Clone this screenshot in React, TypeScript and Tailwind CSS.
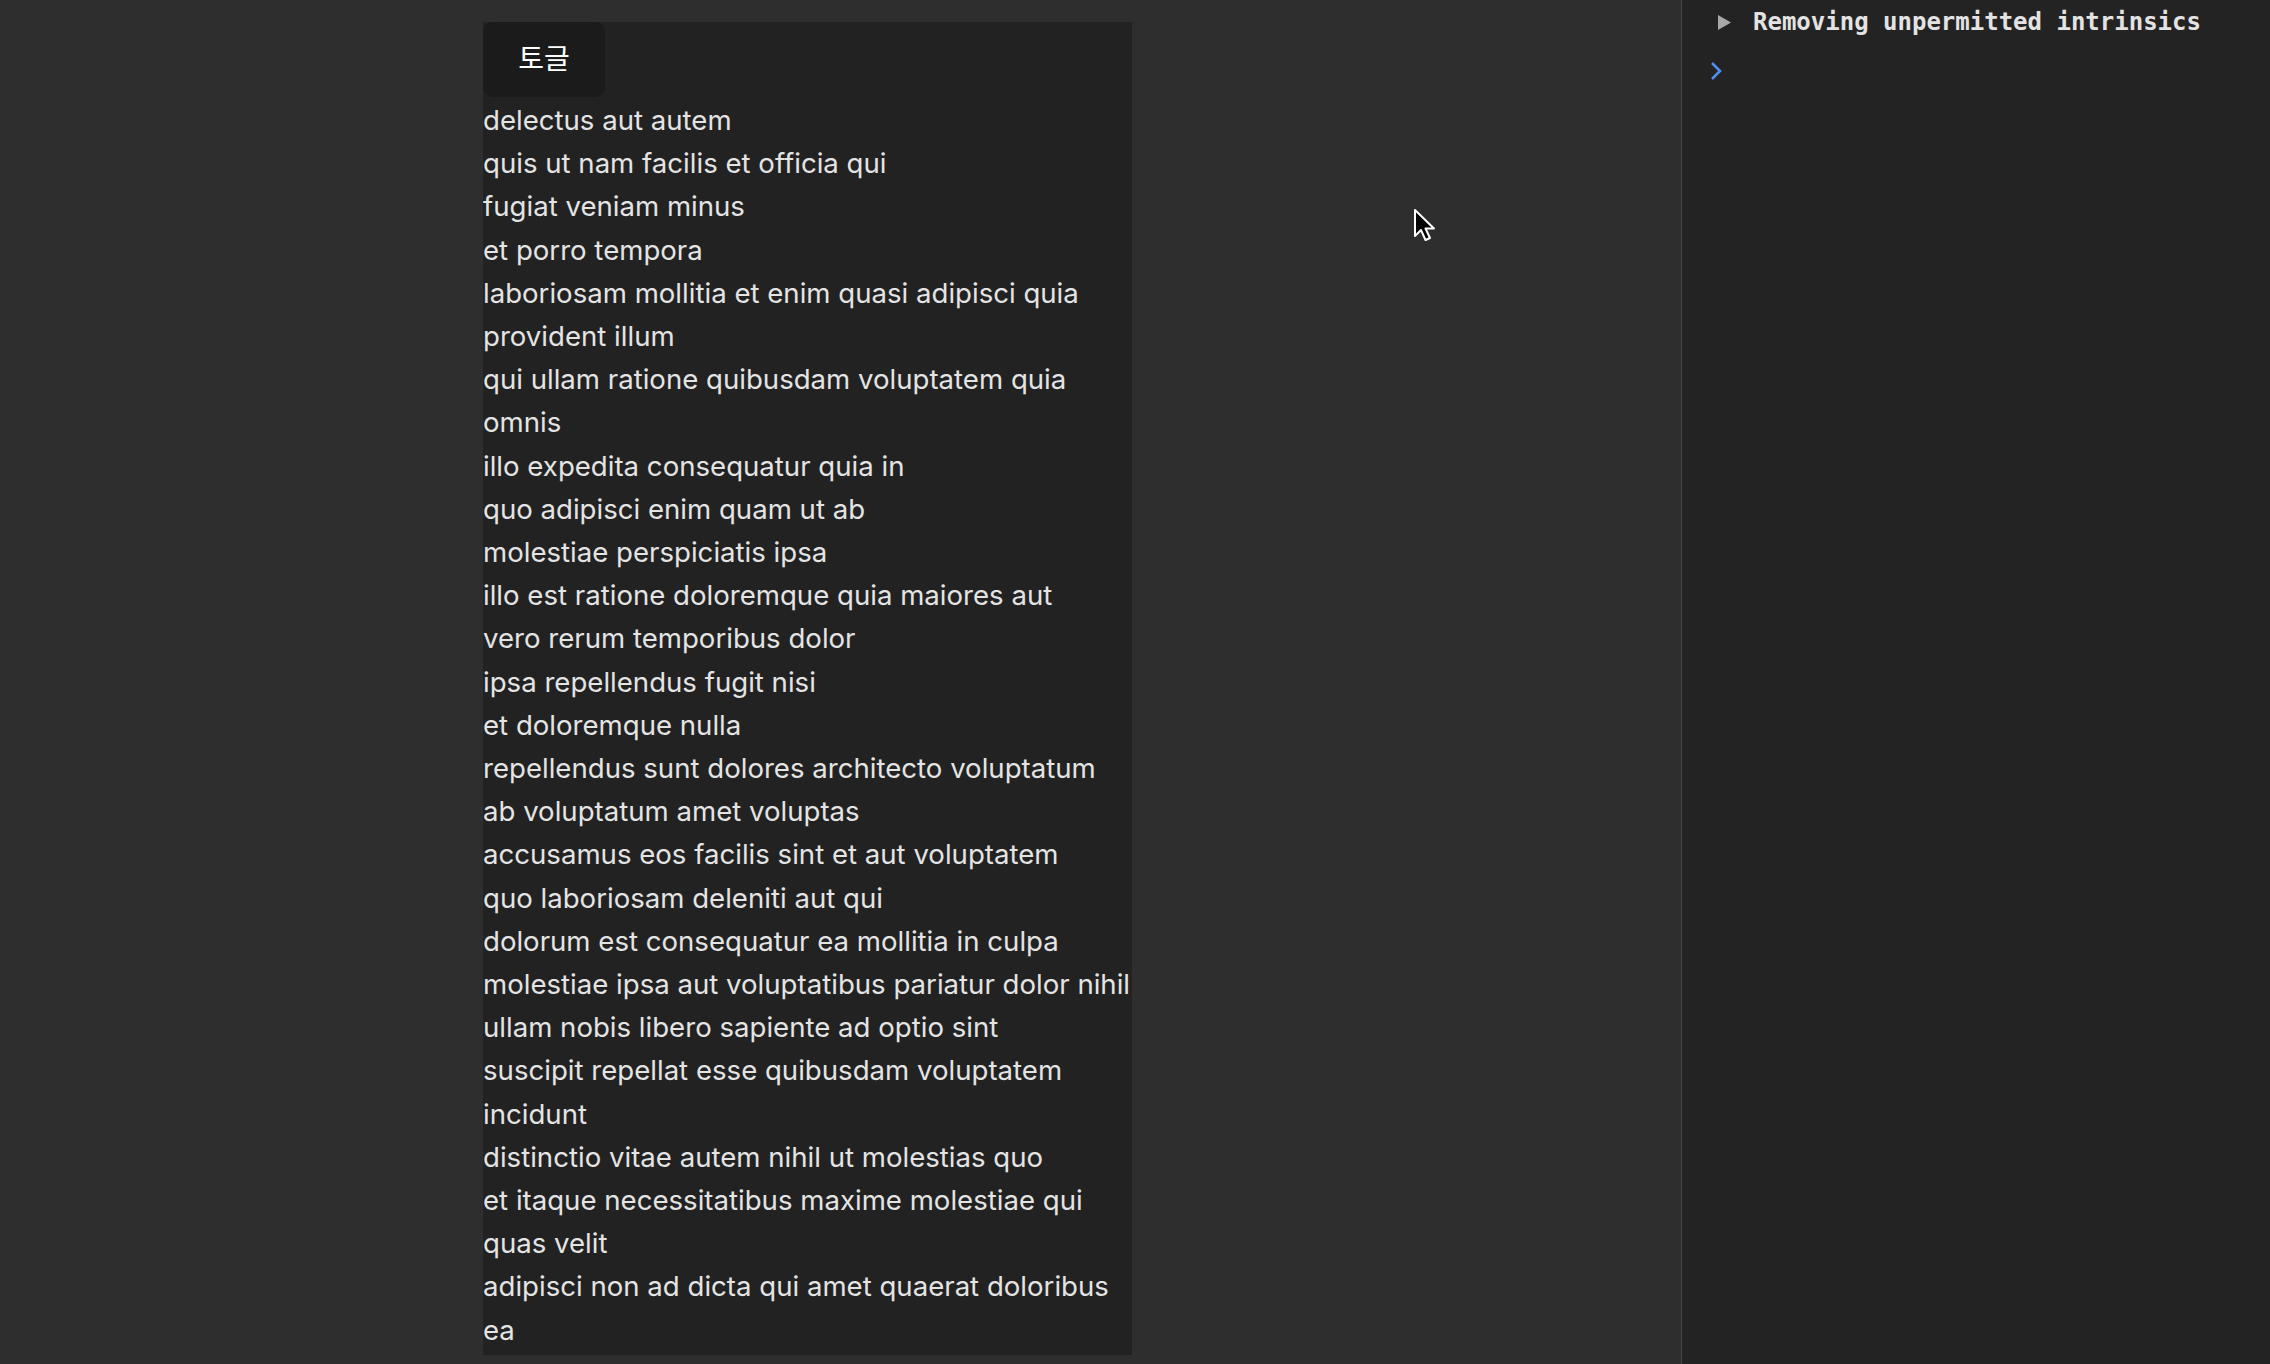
import { useState } from 'react';

const todos = [
  'delectus aut autem',
  'quis ut nam facilis et officia qui',
  'fugiat veniam minus',
  'et porro tempora',
  'laboriosam mollitia et enim quasi adipisci quia provident illum',
  'qui ullam ratione quibusdam voluptatem quia omnis',
  'illo expedita consequatur quia in',
  'quo adipisci enim quam ut ab',
  'molestiae perspiciatis ipsa',
  'illo est ratione doloremque quia maiores aut',
  'vero rerum temporibus dolor',
  'ipsa repellendus fugit nisi',
  'et doloremque nulla',
  'repellendus sunt dolores architecto voluptatum',
  'ab voluptatum amet voluptas',
  'accusamus eos facilis sint et aut voluptatem',
  'quo laboriosam deleniti aut qui',
  'dolorum est consequatur ea mollitia in culpa',
  'molestiae ipsa aut voluptatibus pariatur dolor nihil',
  'ullam nobis libero sapiente ad optio sint',
  'suscipit repellat esse quibusdam voluptatem incidunt',
  'distinctio vitae autem nihil ut molestias quo',
  'et itaque necessitatibus maxime molestiae qui quas velit',
  'adipisci non ad dicta qui amet quaerat doloribus ea',
];

export default function App() {
  const [open, setOpen] = useState(true);

  return (
    <div className="relative flex h-[1364px] w-full overflow-hidden bg-[#2e2e2e]">
      {/* Page area */}
      <div className="w-[1681px] shrink-0 pl-[483px] pt-[22px]">
        <div
          className="h-[1333px] w-[649px] overflow-hidden bg-[#222222] text-[27.6px] leading-[43.2px] text-[#e4e4e4]"
          style={{ fontFamily: 'Inter, "Noto Sans", sans-serif' }}
        >
          <button
            onClick={() => setOpen((v) => !v)}
            className="flex h-[75px] w-[122px] items-center justify-center rounded-[10px] bg-[#1b1b1b] text-[28px] text-white"
            style={{ fontFamily: 'Inter, "Noto Sans CJK KR", sans-serif' }}
          >
            토글
          </button>
          {open && (
            <div className="pt-[2px]">
              {todos.map((t) => (
                <div key={t}>{t}</div>
              ))}
            </div>
          )}
        </div>
      </div>

      {/* DevTools console */}
      <div
        className="flex-1 border-l border-[#454545] bg-[#232323]"
        style={{ fontFamily: '"DejaVu Sans Mono", "Liberation Mono", monospace' }}
      >
        <div className="flex h-[44px] items-center pl-[36px]">
          <svg width="13" height="15" viewBox="0 0 13 15" className="mr-[22px]">
            <path d="M0 0 L13 7.5 L0 15 Z" fill="#a8a8a8" />
          </svg>
          <span className="text-[24px] font-bold text-[#e3e3e3]">Removing unpermitted intrinsics</span>
        </div>
        <div className="flex h-[54px] items-center pl-[28px]">
          <svg width="12" height="20" viewBox="0 0 12 20">
            <path d="M2 2 L10 10 L2 18" fill="none" stroke="#4d8ff0" strokeWidth="2.6" />
          </svg>
        </div>
      </div>

      {/* Mouse cursor */}
      <svg
        width="24"
        height="36"
        viewBox="0 0 24 36"
        className="pointer-events-none absolute left-[1413px] top-[208px]"
      >
        <path
          d="M2 2 L2 28 L8 22 L12.5 32 L17 30 L12.5 20.5 L21 20.5 Z"
          fill="#000"
          stroke="#fff"
          strokeWidth="2"
          strokeLinejoin="round"
        />
      </svg>
    </div>
  );
}
